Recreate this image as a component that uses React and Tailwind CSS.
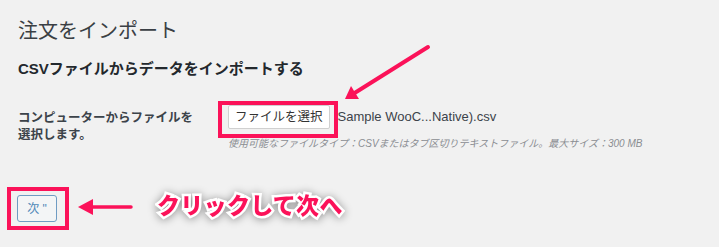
export default function App() {
  return (
    <div
      className="relative h-[247px] w-[719px] overflow-hidden bg-[#f1f1f1] pl-[18px] pt-[18px] text-[#23282d]"
      style={{ fontFamily: '"Liberation Sans", "Noto Sans CJK JP", sans-serif' }}
    >
      <h1 className="text-[20px] leading-[26px] font-normal text-[#3a3f44]">注文をインポート</h1>

      <h2 className="mt-[15px] text-[15px] leading-[20px] font-bold text-[#23282d]">
        CSVファイルからデータをインポートする
      </h2>

      <div className="mt-[26px] flex">
        <div className="w-[210px] pt-[5px] text-[12.5px] leading-[17px] font-semibold text-[#3c434a]">
          コンピューターからファイルを
          <br />
          選択します。
        </div>
        <div>
          <div className="flex items-center">
            <button className="h-[24px] rounded-[2px] border border-[#d0d0d0] bg-white px-[6px] text-[12.5px] leading-none text-[#333]">
              ファイルを選択
            </button>
            <span className="ml-[8px] text-[13px] text-[#3c434a]">Sample WooC...Native).csv</span>
          </div>
          <p className="mt-[8px] text-[10px] leading-[14px] italic text-[#8a8d91]">
            使用可能なファイルタイプ：CSVまたはタブ区切りテキストファイル。最大サイズ：300 MB
          </p>
        </div>
      </div>

      <button className="mt-[44px] -ml-[1px] h-[27px] w-[40px] rounded-[3px] border border-[#6f9cc3] bg-[#f3f5f6] text-[12px] leading-none text-[#4f88b8]">
        次 "
      </button>

      {/* annotations */}
      <div className="absolute left-[218px] top-[101px] h-[37px] w-[120px] border-[4px] border-[#fb1259]" />
      <div className="absolute left-[7px] top-[187px] h-[43px] w-[62px] border-[4px] border-[#fb1259]" />

      <svg className="absolute left-0 top-0" width="719" height="247" viewBox="0 0 719 247">
        <line x1="428" y1="47" x2="353" y2="94" stroke="#fb1259" strokeWidth="4" strokeLinecap="round" />
        <polygon points="345,99 351,86 359,99" fill="#fb1259" />
        <line x1="131" y1="207" x2="88" y2="207" stroke="#fb1259" strokeWidth="3.5" strokeLinecap="round" />
        <polygon points="78,207 93,199 93,215" fill="#fb1259" />
      </svg>

      <div
        className="absolute left-[157px] top-[190px] text-[23px] leading-[28px] font-black tracking-[0.3px] text-[#fb1259] [-webkit-text-stroke:5px_white] [paint-order:stroke_fill] [filter:drop-shadow(0_1px_4px_rgba(0,0,0,0.4))]"
        style={{ fontFamily: '"Noto Sans CJK JP", sans-serif' }}
      >
        クリックして次へ
      </div>
    </div>
  );
}
